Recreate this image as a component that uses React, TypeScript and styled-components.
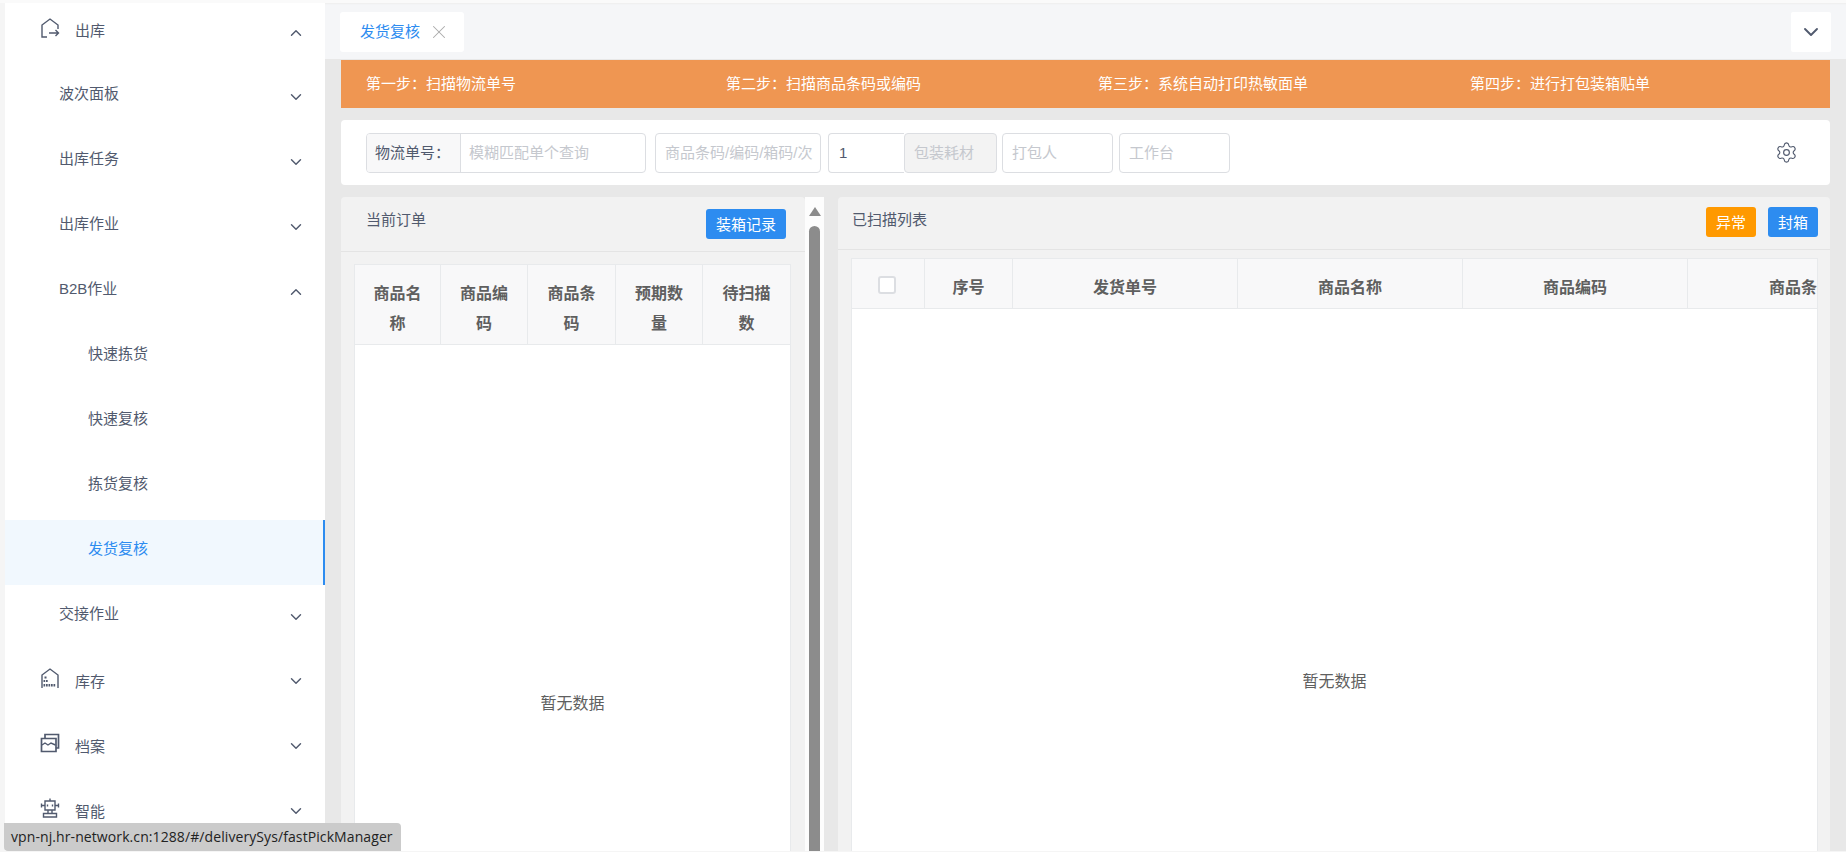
import React from 'react';
import styled, { createGlobalStyle } from 'styled-components';
import { ChevronDown, ChevronUp, Settings, X } from 'lucide-react';

const GlobalStyle = createGlobalStyle`
  html, body {
    margin: 0;
    height: 100%;
    overflow: hidden;
    background: #e8e8e8;
  }
  #root {
    height: 100%;
  }
  * {
    box-sizing: border-box;
  }
`;

const Page = styled.div`
  position: relative;
  display: flex;
  width: 1846px;
  height: 852px;
  overflow: hidden;
  padding-bottom: 1px;
  border-top: 3px solid #fafafa;
  background: #f5f5f5;
  font-family: "Liberation Sans", "Noto Sans CJK SC", sans-serif;
  font-size: 15px;
  color: #515a6e;
`;

const Sidebar = styled.aside`
  flex: none;
  width: 320px;
  margin-left: 5px;
  background: #fff;
  overflow: hidden;
`;

const MenuRow = styled.div<{ $indent: number; $active?: boolean; $height?: number; $lift?: number }>`
  display: flex;
  align-items: center;
  height: ${(p) => p.$height ?? 65}px;
  padding: 0 ${(p) => (p.$active ? 18 : 20)}px ${(p) => p.$lift ?? 10}px ${(p) => p.$indent}px;
  background: ${(p) => (p.$active ? '#f1f8fe' : 'transparent')};
  border-right: ${(p) => (p.$active ? '2px solid #2d8cf0' : '0')};
  color: ${(p) => (p.$active ? '#2d8cf0' : '#515a6e')};
`;

const MenuIcon = styled.svg`
  flex: none;
  width: 20px;
  height: 20px;
  margin-right: 15px;
  margin-top: -6px;
  fill: none;
  stroke: #515a6e;
  stroke-width: 1.4;
`;

const FirstMenuIcon = styled(MenuIcon)`
  margin-top: -3px;
`;

const MenuLabel = styled.span`
  flex: 1;
`;

const ChevronSlot = styled.span<{ $drop?: number }>`
  display: flex;
  margin-top: ${(p) => p.$drop ?? 8}px;
`;

const Main = styled.main`
  flex: 1;
  min-width: 0;
  display: flex;
  flex-direction: column;
  background: #e8e8e8;
`;

const TabBar = styled.div`
  flex: none;
  display: flex;
  align-items: flex-start;
  justify-content: space-between;
  height: 56px;
  padding: 9px 15px 0 15px;
  background: #f5f6f8;
  box-shadow: inset 0 2px 2px -1px #eeeeee;
`;

const Tab = styled.div`
  display: flex;
  align-items: center;
  gap: 8px;
  height: 40px;
  padding: 0 14px 0 20px;
  border-radius: 3px;
  background: #fff;
  color: #2d8cf0;
`;

const TabText = styled.span`
  margin-top: -3px;
`;

const TabClose = styled(X)`
  color: #aaa;
`;

const TabMenu = styled.div`
  display: flex;
  align-items: center;
  justify-content: center;
  width: 40px;
  height: 40px;
  border-radius: 2px;
  background: #fff;
  color: #515a6e;
`;

const Content = styled.div`
  flex: 1;
  min-height: 0;
  display: flex;
  flex-direction: column;
  gap: 12px;
  padding: 1px 16px 0;
`;

const Steps = styled.div`
  flex: none;
  display: grid;
  grid-template-columns: 360px 372px 372px 1fr;
  align-items: center;
  height: 48px;
  padding: 0 0 4px 25px;
  background: #ef9652;
  color: #fff;
`;

const FilterCard = styled.div`
  flex: none;
  display: flex;
  align-items: center;
  height: 65px;
  padding: 0 32px 0 25px;
  border-radius: 4px;
  background: #fff;
`;

const Field = styled.div<{ $width: number; $gap?: number }>`
  display: flex;
  flex: none;
  align-items: center;
  width: ${(p) => p.$width}px;
  height: 40px;
  margin-right: ${(p) => p.$gap ?? 6}px;
  padding: 0 9px 3px;
  overflow: hidden;
  white-space: nowrap;
  border: 1px solid #dcdee2;
  border-radius: 4px;
  color: #c5c8ce;
`;

const AddonField = styled.div`
  display: flex;
  flex: none;
  width: 280px;
  height: 40px;
  margin-right: 9px;
  border: 1px solid #dcdee2;
  border-radius: 4px;
  overflow: hidden;
`;

const Addon = styled.div`
  display: flex;
  align-items: center;
  width: 94px;
  padding: 0 0 3px 8px;
  background: #f8f8f9;
  border-right: 1px solid #dcdee2;
  color: #515a6e;
`;

const AddonInput = styled.div`
  display: flex;
  align-items: center;
  padding: 0 0 3px 8px;
  color: #c5c8ce;
`;

const QtyField = styled.div`
  display: flex;
  flex: none;
  width: 169px;
  height: 40px;
  margin-right: 5px;
`;

const QtyInput = styled.div`
  display: flex;
  align-items: center;
  flex: 1;
  padding-left: 10px;
  border: 1px solid #dcdee2;
  border-right: 0;
  border-radius: 4px 0 0 4px;
  color: #515a6e;
`;

const QtyAddon = styled.div`
  display: flex;
  align-items: center;
  width: 93px;
  padding: 0 0 3px 9px;
  border: 1px solid #dcdee2;
  border-radius: 4px;
  background: #f3f3f3;
  color: #c5c8ce;
`;

const GearButton = styled(Settings)`
  margin-left: auto;
  color: #515a6e;
`;

const Panels = styled.div`
  flex: 1;
  min-height: 0;
  display: flex;
  overflow: hidden;
`;

const Panel = styled.section<{ $width?: number }>`
  flex: ${(p) => (p.$width ? `none` : 1)};
  width: ${(p) => (p.$width ? `${p.$width}px` : 'auto')};
  min-width: 0;
  display: flex;
  flex-direction: column;
  border-radius: 4px 4px 0 0;
  background: #f2f2f2;
`;

const PanelHead = styled.div<{ $height: number; $top: number; $left: number; $right: number }>`
  flex: none;
  display: flex;
  justify-content: space-between;
  height: ${(p) => p.$height}px;
  padding: ${(p) => p.$top}px ${(p) => p.$right}px 0 ${(p) => p.$left}px;
  border-bottom: 1px solid #e4e4e4;
`;

const PanelTitle = styled.span<{ $offset: number }>`
  margin-top: ${(p) => p.$offset}px;
  line-height: 20px;
`;

const HeadActions = styled.div`
  display: flex;
  gap: 12px;
  height: 30px;
`;

const Button = styled.div<{ $warn?: boolean }>`
  display: flex;
  align-items: center;
  padding: 0 10px 2px;
  height: 30px;
  border-radius: 3px;
  background: ${(p) => (p.$warn ? '#ff9900' : '#2d8cf0')};
  color: #fff;
`;

const TableWrap = styled.div<{ $inset: string }>`
  flex: none;
  display: flex;
  flex-direction: column;
  margin: ${(p) => p.$inset};
  border: 1px solid #e8eaec;
  border-bottom: 0;
  background: #fff;
  overflow: hidden;
`;

const HeadRow = styled.div<{ $columns: string; $height: number }>`
  flex: none;
  display: grid;
  grid-template-columns: ${(p) => p.$columns};
  height: ${(p) => p.$height}px;
  background: #f8f8f9;
  border-bottom: 1px solid #e8eaec;
`;

const HeadCell = styled.div<{ $top: number }>`
  display: flex;
  align-items: center;
  justify-content: center;
  padding: ${(p) => p.$top}px 14px 0;
  border-right: 1px solid #e8eaec;
  font-size: 16px;
  font-weight: 700;
  line-height: 30px;
  text-align: center;
  color: #5f5f5f;
  white-space: normal;
  &:last-child {
    border-right: 0;
  }
`;

const ClippedCell = styled(HeadCell)`
  justify-content: flex-start;
  padding-left: 81px;
  padding-right: 0;
  white-space: nowrap;
  overflow: hidden;
`;

const Checkbox = styled.span`
  width: 18px;
  height: 18px;
  margin: -6px 2px 0 0;
  border: 2px solid #dcdee2;
  border-radius: 3px;
  background: #fff;
`;

const EmptyBody = styled.div<{ $height: number }>`
  flex: none;
  display: flex;
  align-items: center;
  justify-content: center;
  height: ${(p) => p.$height}px;
  font-size: 16px;
  color: #5f5f5f;
`;

const ScrollTrack = styled.div`
  flex: none;
  display: flex;
  flex-direction: column;
  align-items: center;
  width: 19px;
  margin-right: 14px;
  padding-top: 10px;
  background: #fdfdfd;
`;

const ScrollArrow = styled.div`
  width: 0;
  height: 0;
  margin-bottom: 10px;
  border-left: 6.5px solid transparent;
  border-right: 6.5px solid transparent;
  border-bottom: 9px solid #8c8c8c;
`;

const ScrollThumb = styled.div`
  flex: 1;
  width: 11px;
  border-radius: 6px 6px 0 0;
  background: #8c8c8c;
`;

const LinkStatus = styled.div`
  position: absolute;
  left: 4px;
  bottom: 1px;
  height: 28px;
  padding: 0 8px 0 7px;
  border-radius: 0 4px 0 4px;
  background: #cbcbcb;
  font-family: "Open Sans", "Liberation Sans", sans-serif;
  font-size: 14px;
  letter-spacing: 0.09px;
  line-height: 28px;
  color: #222;
  white-space: nowrap;
`;

const OutboundIcon = () => (
  <FirstMenuIcon viewBox="0 0 20 20">
    <path d="M7 19H2V7l8-6 8 6v4" />
    <path d="M9 15h9.500M15.500 12l3 3-3 3" />
  </FirstMenuIcon>
);

const StockDots = styled.path`
  fill: #515a6e;
  stroke: none;
`;

const StockIcon = () => (
  <MenuIcon viewBox="0 0 20 20">
    <path d="M2 20V7l8-6 8 6v13" />
    <StockDots d="M4.500 8.500h2v2h-2zM3.500 12h1.700v2H3.500zM6 12h1.700v2H6zM3.500 16h1.700v2.500H3.500zM6 16h1.700v2.500H6zM8.500 16h1.700v2.500H8.500zM11 16h1.700v2.500H11zM13.500 16h1.700v2.500h-1.700z" />
  </MenuIcon>
);

const ArchiveIcon = () => (
  <MenuIcon viewBox="0 0 20 20">
    <path d="M1.500 5.500h14.500v13H1.500zM5 5.500V1.500h13.500V15H16" strokeWidth="1.700" />
    <path d="M2 12l3-2 3 2 3-2 4.500 2" />
  </MenuIcon>
);

const RobotIcon = () => (
  <MenuIcon viewBox="0 0 20 20">
    <path d="M10 .5v2M5 3h10v9H5zM1.500 5.500v4M18.500 5.500v4M2 7.500h3M15 7.500h3" />
    <path d="M7.500 6.500v2M12.500 6.500v2" />
    <path d="M8 12v3.500M12 12v3.500M3.500 15.500h13v3.500h-13z" />
  </MenuIcon>
);

const Chevron = ({ open, drop }: { open?: boolean; drop?: number }) => (
  <ChevronSlot $drop={drop}>
    {open ? <ChevronUp size={18} strokeWidth={1.9} /> : <ChevronDown size={18} strokeWidth={1.9} />}
  </ChevronSlot>
);

const orderColumns = ['商品名称', '商品编码', '商品条码', '预期数量', '待扫描数'];
const scannedColumns = ['序号', '发货单号', '商品名称', '商品编码'];
const steps = ['第一步：扫描物流单号', '第二步：扫描商品条码或编码', '第三步：系统自动打印热敏面单', '第四步：进行打包装箱贴单'];

const App: React.FC = () => (
  <Page>
    <GlobalStyle />
    <Sidebar>
      <MenuRow $indent={35} $height={62} $lift={9}>
        <OutboundIcon />
        <MenuLabel>出库</MenuLabel>
        <Chevron open drop={7} />
      </MenuRow>
      <MenuRow $indent={54}><MenuLabel>波次面板</MenuLabel><Chevron /></MenuRow>
      <MenuRow $indent={54}><MenuLabel>出库任务</MenuLabel><Chevron /></MenuRow>
      <MenuRow $indent={54}><MenuLabel>出库作业</MenuLabel><Chevron /></MenuRow>
      <MenuRow $indent={54}><MenuLabel>B2B作业</MenuLabel><Chevron open /></MenuRow>
      <MenuRow $indent={83}><MenuLabel>快速拣货</MenuLabel></MenuRow>
      <MenuRow $indent={83}><MenuLabel>快速复核</MenuLabel></MenuRow>
      <MenuRow $indent={83}><MenuLabel>拣货复核</MenuLabel></MenuRow>
      <MenuRow $indent={83} $active><MenuLabel>发货复核</MenuLabel></MenuRow>
      <MenuRow $indent={54}><MenuLabel>交接作业</MenuLabel><Chevron /></MenuRow>
      <MenuRow $indent={35} $lift={4}>
        <StockIcon />
        <MenuLabel>库存</MenuLabel>
        <Chevron drop={0} />
      </MenuRow>
      <MenuRow $indent={35} $lift={4}>
        <ArchiveIcon />
        <MenuLabel>档案</MenuLabel>
        <Chevron drop={0} />
      </MenuRow>
      <MenuRow $indent={35} $lift={4}>
        <RobotIcon />
        <MenuLabel>智能</MenuLabel>
        <Chevron drop={0} />
      </MenuRow>
    </Sidebar>

    <Main>
      <TabBar>
        <Tab>
          <TabText>发货复核</TabText>
          <TabClose size={22} strokeWidth={1.1} />
        </Tab>
        <TabMenu>
          <ChevronDown size={24} strokeWidth={1.9} />
        </TabMenu>
      </TabBar>

      <Content>
        <Steps>
          {steps.map((step) => (
            <span key={step}>{step}</span>
          ))}
        </Steps>

        <FilterCard>
          <AddonField>
            <Addon>物流单号：</Addon>
            <AddonInput>模糊匹配单个查询</AddonInput>
          </AddonField>
          <Field $width={166} $gap={7}>商品条码/编码/箱码/次</Field>
          <QtyField>
            <QtyInput>1</QtyInput>
            <QtyAddon>包装耗材</QtyAddon>
          </QtyField>
          <Field $width={111}>打包人</Field>
          <Field $width={111}>工作台</Field>
          <GearButton size={23} strokeWidth={1.2} />
        </FilterCard>

        <Panels>
          <Panel $width={464}>
            <PanelHead $height={55} $top={12} $left={25} $right={19}>
              <PanelTitle $offset={1}>当前订单</PanelTitle>
              <Button>装箱记录</Button>
            </PanelHead>
            <TableWrap $inset="12px 14px 0 13px">
              <HeadRow $columns="86px 87px 88px 87px 1fr" $height={80}>
                {orderColumns.map((name) => (
                  <HeadCell key={name} $top={9}>{name}</HeadCell>
                ))}
              </HeadRow>
              <EmptyBody $height={714}>暂无数据</EmptyBody>
            </TableWrap>
          </Panel>
          <ScrollTrack>
            <ScrollArrow />
            <ScrollThumb />
          </ScrollTrack>
          <Panel>
            <PanelHead $height={53} $top={10} $left={14} $right={12}>
              <PanelTitle $offset={3}>已扫描列表</PanelTitle>
              <HeadActions>
                <Button $warn>异常</Button>
                <Button>封箱</Button>
              </HeadActions>
            </PanelHead>
            <TableWrap $inset="8px 12px 0 13px">
              <HeadRow $columns="73px 88px 225px 225px 225px 1fr" $height={50}>
                <HeadCell $top={9}><Checkbox /></HeadCell>
                {scannedColumns.map((name) => (
                  <HeadCell key={name} $top={9}>{name}</HeadCell>
                ))}
                <ClippedCell $top={9}>商品条码</ClippedCell>
              </HeadRow>
              <EmptyBody $height={742}>暂无数据</EmptyBody>
            </TableWrap>
          </Panel>
        </Panels>
      </Content>
    </Main>

    <LinkStatus>vpn-nj.hr-network.cn:1288/#/deliverySys/fastPickManager</LinkStatus>
  </Page>
);

export default App;
